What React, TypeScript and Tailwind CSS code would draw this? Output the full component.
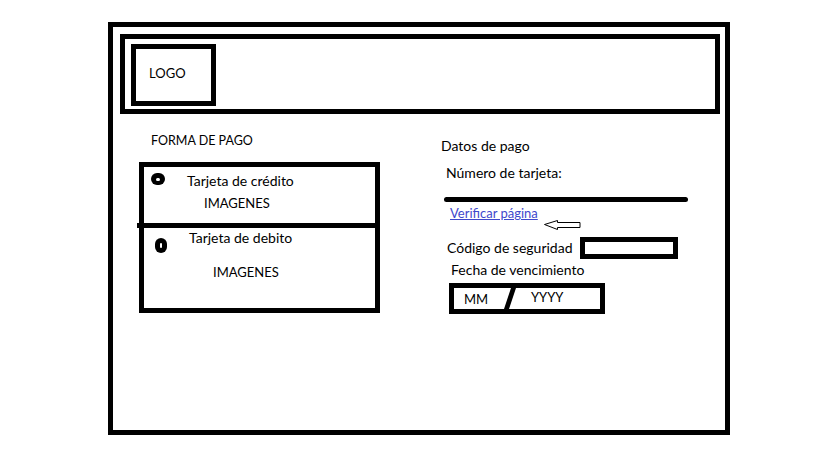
export default function App() {
  return (
    <div className="h-[460px] w-[819px] bg-white pl-[108px] pt-[22px] font-['Lato','Liberation_Sans',sans-serif] text-[14px] text-black">
      <div className="h-[413px] w-[622px] border-[5px] border-black">
        {/* header */}
        <div className="ml-[7px] mt-[7px] h-[80px] w-[600px] border-[5px] border-black pl-[6px] pt-[5px]">
          <div className="h-[62px] w-[85px] border-[5px] border-black pl-[13px] pt-[16px] text-[13px] leading-[16px]">
            LOGO
          </div>
        </div>

        <div className="flex">
          {/* forma de pago */}
          <div className="ml-[26px] flex flex-col">
            <div className="ml-[12px] mt-[19px] text-[12.5px] leading-[16px]">FORMA DE PAGO</div>
            <div className="mt-[13px] h-[151px] w-[241px] border-[5px] border-black">
              <div className="flex h-[56px]">
                <div className="ml-[7px] mt-[6px] flex h-[12px] w-[14px] items-center justify-center rounded-full bg-black">
                  <span className="h-[3px] w-[4px] rounded-full bg-white" />
                </div>
                <div className="ml-[22px] flex flex-col leading-[16px]">
                  <span className="mt-[6px]">Tarjeta de crédito</span>
                  <span className="ml-[17px] mt-[6px] text-[13px]">IMAGENES</span>
                </div>
              </div>
              <div className="ml-[-7px] h-[5px] w-[238px] bg-black" />
              <div className="flex">
                <div className="ml-[11px] mt-[10px] flex h-[15px] w-[12px] items-center justify-center rounded-full bg-black">
                  <span className="h-[5px] w-[2px] rounded-full bg-white" />
                </div>
                <div className="ml-[22px] flex flex-col leading-[16px]">
                  <span className="mt-[2px]">Tarjeta de debito</span>
                  <span className="ml-[24px] mt-[18px] text-[13px]">IMAGENES</span>
                </div>
              </div>
            </div>
          </div>

          {/* datos de pago */}
          <div className="ml-[61px] flex flex-col">
            <div className="mt-[24px] leading-[16px]">Datos de pago</div>
            <div className="ml-[5px] mt-[11px] leading-[16px]">Número de tarjeta:</div>
            <div className="ml-[3px] mt-[16px] h-[5px] w-[244px] rounded-full bg-black" />
            <div className="ml-[9px] mt-[4px] flex items-start">
              <a href="#" className="text-[13px] leading-[14px] text-[#3f48cc] underline">
                Verificar página
              </a>
              <svg className="ml-[6px] mt-[14px]" width="37" height="10" viewBox="0 0 37 10">
                <path
                  d="M0.5 4.5 L13.5 0.5 L13.5 2.5 L36 2.5 L36 7.5 L13.5 7.5 L13.5 9.5 Z"
                  fill="white"
                  stroke="black"
                  strokeWidth="1"
                />
              </svg>
            </div>
            <div className="ml-[6px] mt-[7px] flex items-center">
              <span className="w-[133px] leading-[16px]">Código de seguridad</span>
              <div className="h-[22px] w-[98px] border-[5px] border-black" />
            </div>
            <div className="ml-[10px] mt-[3px] leading-[16px]">Fecha de vencimiento</div>
            <div className="ml-[8px] mt-[5px] flex h-[31px] w-[156px] items-center border-[5px] border-black text-[13px]">
              <span className="ml-[10px] w-[40px] leading-[16px]">MM</span>
              <svg width="12" height="21" viewBox="0 0 12 21">
                <polygon points="0,21 5,21 12,0 7,0" fill="black" />
              </svg>
              <span className="ml-[15px] -mt-[4px] leading-[16px]">YYYY</span>
            </div>
          </div>
        </div>
      </div>
    </div>
  );
}
